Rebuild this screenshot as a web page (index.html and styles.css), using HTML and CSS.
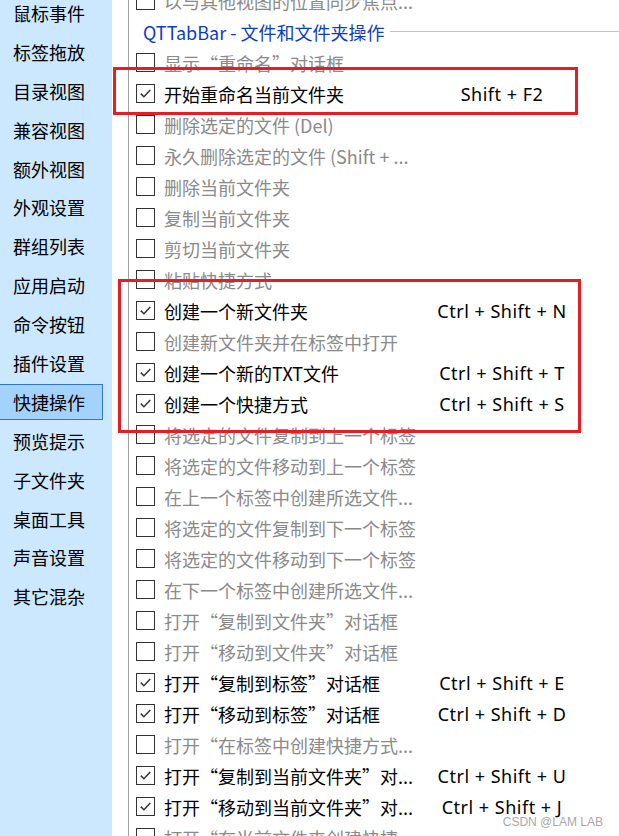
FILE: index.html
```html
<!DOCTYPE html>
<html lang="zh-CN">
<head>
  <meta charset="UTF-8">
  <title>QTTabBar 选项 - 快捷操作</title>
  <link rel="stylesheet" href="styles.css">
</head>
<body>

  <div class="window">
    <ul class="nav">
      <li>鼠标事件</li>
      <li>标签拖放</li>
      <li>目录视图</li>
      <li>兼容视图</li>
      <li>额外视图</li>
      <li>外观设置</li>
      <li>群组列表</li>
      <li>应用启动</li>
      <li>命令按钮</li>
      <li>插件设置</li>
      <li class="active">快捷操作</li>
      <li>预览提示</li>
      <li>子文件夹</li>
      <li>桌面工具</li>
      <li>声音设置</li>
      <li>其它混杂</li>
    </ul>

    <div class="panel">
      <div class="list">
        <div class="row"><span class="box"></span><span class="label">以与其他视图的位置同步焦点...</span></div>

        <div class="group">
          <span class="group-title">QTTabBar - 文件和文件夹操作</span>
          <span class="group-line"></span>
        </div>

        <div class="row"><span class="box"></span><span class="label">显示“重命名”对话框</span></div>
        <div class="row on"><span class="box"></span><span class="label">开始重命名当前文件夹</span><span class="key">Shift + F2</span></div>
        <div class="row"><span class="box"></span><span class="label">删除选定的文件 (Del)</span></div>
        <div class="row"><span class="box"></span><span class="label">永久删除选定的文件 (Shift + ...</span></div>
        <div class="row"><span class="box"></span><span class="label">删除当前文件夹</span></div>
        <div class="row"><span class="box"></span><span class="label">复制当前文件夹</span></div>
        <div class="row"><span class="box"></span><span class="label">剪切当前文件夹</span></div>
        <div class="row"><span class="box"></span><span class="label">粘贴快捷方式</span></div>
        <div class="row on"><span class="box"></span><span class="label">创建一个新文件夹</span><span class="key">Ctrl + Shift + N</span></div>
        <div class="row"><span class="box"></span><span class="label">创建新文件夹并在标签中打开</span></div>
        <div class="row on"><span class="box"></span><span class="label">创建一个新的TXT文件</span><span class="key">Ctrl + Shift + T</span></div>
        <div class="row on"><span class="box"></span><span class="label">创建一个快捷方式</span><span class="key">Ctrl + Shift + S</span></div>
        <div class="row"><span class="box"></span><span class="label">将选定的文件复制到上一个标签</span></div>
        <div class="row"><span class="box"></span><span class="label">将选定的文件移动到上一个标签</span></div>
        <div class="row"><span class="box"></span><span class="label">在上一个标签中创建所选文件...</span></div>
        <div class="row"><span class="box"></span><span class="label">将选定的文件复制到下一个标签</span></div>
        <div class="row"><span class="box"></span><span class="label">将选定的文件移动到下一个标签</span></div>
        <div class="row"><span class="box"></span><span class="label">在下一个标签中创建所选文件...</span></div>
        <div class="row"><span class="box"></span><span class="label">打开“复制到文件夹”对话框</span></div>
        <div class="row"><span class="box"></span><span class="label">打开“移动到文件夹”对话框</span></div>
        <div class="row on"><span class="box"></span><span class="label">打开“复制到标签”对话框</span><span class="key">Ctrl + Shift + E</span></div>
        <div class="row on"><span class="box"></span><span class="label">打开“移动到标签”对话框</span><span class="key">Ctrl + Shift + D</span></div>
        <div class="row"><span class="box"></span><span class="label">打开“在标签中创建快捷方式...</span></div>
        <div class="row on"><span class="box"></span><span class="label">打开“复制到当前文件夹”对...</span><span class="key">Ctrl + Shift + U</span></div>
        <div class="row on"><span class="box"></span><span class="label">打开“移动到当前文件夹”对...</span><span class="key">Ctrl + Shift + J</span></div>
        <div class="row"><span class="box"></span><span class="label">打开“在当前文件夹创建快捷...</span></div>
      </div>
    </div>

    <!-- annotation boxes drawn over the screenshot -->
    <div class="mark mark-rename"></div>
    <div class="mark mark-create"></div>

    <div class="watermark">CSDN @LAM LAB</div>
  </div>

</body>
</html>
```

FILE: styles.css
```css
body { margin: 0; font-family: "Noto Sans CJK SC", "Noto Sans", sans-serif; font-size: 18px; color: #000; background: #fff; }
.window { position: relative; display: flex; height: 836px; overflow: hidden; }

.nav { list-style: none; margin: 0; padding: 0; width: 112px; flex: none; background: #cce8ff; }
.nav li { height: 36px; line-height: 36px; margin-top: 2.9px; padding-left: 13px; box-sizing: border-box; }
.nav li:first-child { margin-top: -5px; }
.nav li.active { width: 103px; background: #a3d3fd; border: 1px solid #2f78c8; border-left: none; line-height: 34px; }

.panel { flex: 1; margin-left: 16px; border-left: 1px solid #a0a0a0; }
.list { margin-top: -15px; padding-left: 7px; }

.row { display: flex; align-items: center; height: 31px; color: #8a8a8a; }
.row.on { color: #000; }
.box { width: 19px; height: 19px; flex: none; box-sizing: border-box; border: 1px solid #333; margin-right: 9px; background: #fff center / 15px 15px no-repeat; }
.row.on .box { background-image: url("data:image/svg+xml,%3Csvg xmlns='http://www.w3.org/2000/svg' viewBox='0 0 15 15'%3E%3Cpath d='M2.8 7.6 L5.9 10.7 L12.3 4.1' fill='none' stroke='%23333' stroke-width='1.5'/%3E%3C/svg%3E"); }
.label { width: 266px; flex: none; white-space: nowrap; overflow: hidden; }
.key { width: 144px; flex: none; text-align: center; font-family: "Noto Sans", sans-serif; letter-spacing: 0.5px; white-space: nowrap; }

.group { display: flex; align-items: center; height: 31px; padding-left: 7px; color: #0d3cc4; }
.group-title { white-space: nowrap; }
.group-line { flex: 1; height: 1px; margin-left: 5px; background: #b3c4df; }

.mark { position: absolute; border: 3px solid #e81c24; box-sizing: border-box; }
.mark-rename { left: 113px; top: 67px; width: 465px; height: 48px; }
.mark-create { left: 118px; top: 279px; width: 463px; height: 154px; }

.watermark { position: absolute; right: 16px; bottom: 7px; font-family: "Liberation Sans", sans-serif; font-size: 12px; color: #a8a8a8; }
```
